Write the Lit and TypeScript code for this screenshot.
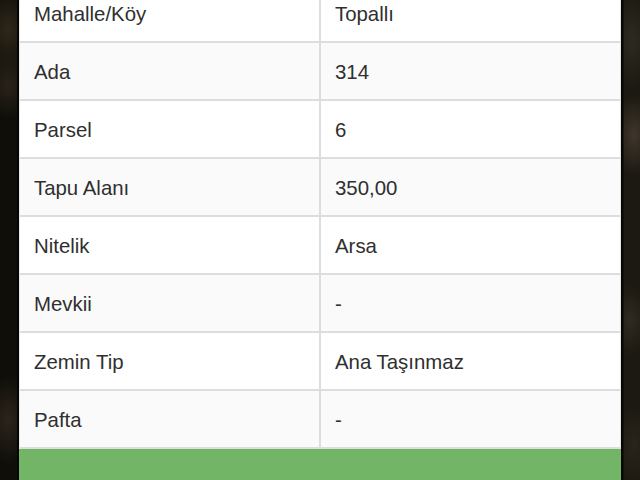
import { LitElement, html, css } from "lit";
import { customElement } from "lit/decorators.js";

const ROWS: [string, string][] = [
  ["Mahalle/Köy", "Topallı"],
  ["Ada", "314"],
  ["Parsel", "6"],
  ["Tapu Alanı", "350,00"],
  ["Nitelik", "Arsa"],
  ["Mevkii", "-"],
  ["Zemin Tip", "Ana Taşınmaz"],
  ["Pafta", "-"],
];

@customElement("app-root")
export class AppRoot extends LitElement {
  static styles = css`
    :host {
      display: block;
      width: 640px;
      height: 480px;
      overflow: hidden;
      box-sizing: border-box;
      padding: 0 19px;
      font-family: "Liberation Sans", Arial, sans-serif;
      background-color: #1c1912;
      background-image:
        linear-gradient(90deg, transparent 17px, #060504 17px, #060504 19px, transparent 19px, transparent 621px, #060504 621px, #0a0906 623px, transparent 624px),
        radial-gradient(ellipse 30px 45px at 8px 30px, #2e2619 0, transparent 100%),
        radial-gradient(ellipse 26px 34px at 8px 85px, #2a2219 0, transparent 100%),
        radial-gradient(ellipse 24px 45px at 8px 420px, #2c241b 0, transparent 100%),
        linear-gradient(90deg, #0f0e09 0, #0f0e09 19px, transparent 19px),
        radial-gradient(ellipse 22px 50px at 632px 40px, #2d2a20 0, transparent 100%),
        radial-gradient(ellipse 22px 40px at 634px 135px, #40362c 0, transparent 100%),
        radial-gradient(ellipse 20px 36px at 630px 320px, #302a20 0, transparent 100%),
        radial-gradient(ellipse 20px 40px at 634px 445px, #2a241a 0, transparent 100%);
    }
    .table {
      margin-top: -15px;
      background: #fff;
      border-left: 1px solid #e8e8e8;
      border-right: 1px solid #e4e4e4;
    }
    .row {
      display: grid;
      grid-template-columns: 299px 1fr;
      height: 58px;
      box-sizing: border-box;
      border-bottom: 2px solid #ddd;
      font-size: 20.4px;
      color: #2f2f2f;
    }
    .row:nth-child(even) {
      background: #fafafa;
    }
    .cell {
      display: flex;
      align-items: center;
      padding: 3px 14px 0;
    }
    .cell + .cell {
      border-left: 2px solid #ddd;
    }
    .footer {
      height: 40px;
      margin: 0 -1px;
      background: #72b567;
    }
  `;

  render() {
    return html`
      <div class="table">
        ${ROWS.map(
          ([k, v]) => html`<div class="row">
            <div class="cell">${k}</div>
            <div class="cell">${v}</div>
          </div>`
        )}
        <div class="footer"></div>
      </div>
    `;
  }
}
